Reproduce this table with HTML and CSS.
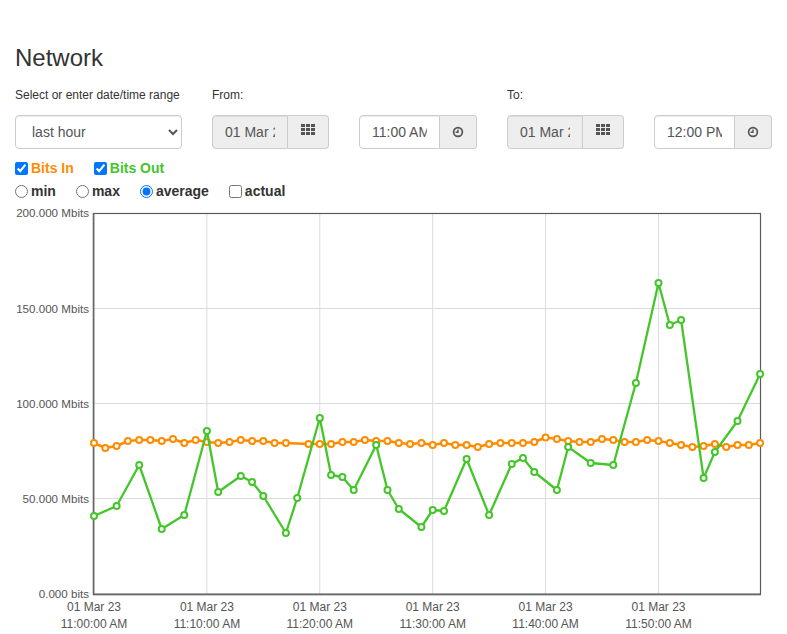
FILE: index.html
```html
<!DOCTYPE html>
<html lang="en">
<head>
<meta charset="utf-8">
<title>Network</title>
<link rel="stylesheet" href="styles.css">
</head>
<body>
<div class="page">
  <h3 class="title">Network</h3>
  <div class="controls">
    <div class="field range">
      <label class="field-label">Select or enter date/time range</label>
      <select class="select">
        <option>last hour</option>
      </select>
    </div>
    <div class="field">
      <label class="field-label">From:</label>
      <div class="groups">
        <div class="group date">
          <input class="control" type="text" value="01 Mar 2023" readonly>
          <span class="addon"><svg class="icon-grid" width="14" height="11" viewBox="0 0 14 11"><g fill="#555"><rect x="0" y="0" width="4" height="3"/><rect x="5" y="0" width="4" height="3"/><rect x="10" y="0" width="4" height="3"/><rect x="0" y="4" width="4" height="3"/><rect x="5" y="4" width="4" height="3"/><rect x="10" y="4" width="4" height="3"/><rect x="0" y="8" width="4" height="3"/><rect x="5" y="8" width="4" height="3"/><rect x="10" y="8" width="4" height="3"/></g></svg></span>
        </div>
        <div class="group time">
          <input class="control" type="text" value="11:00 AM">
          <span class="addon"><svg width="12" height="12" viewBox="-6 -6 12 12"><circle r="4.4" fill="none" stroke="#555" stroke-width="1.7"/><path d="M0 -2.6 V0.3 H-2.4" fill="none" stroke="#555" stroke-width="1.4"/></svg></span>
        </div>
      </div>
    </div>
    <div class="field">
      <label class="field-label">To:</label>
      <div class="groups">
        <div class="group date">
          <input class="control" type="text" value="01 Mar 2023" readonly>
          <span class="addon"><svg class="icon-grid" width="14" height="11" viewBox="0 0 14 11"><g fill="#555"><rect x="0" y="0" width="4" height="3"/><rect x="5" y="0" width="4" height="3"/><rect x="10" y="0" width="4" height="3"/><rect x="0" y="4" width="4" height="3"/><rect x="5" y="4" width="4" height="3"/><rect x="10" y="4" width="4" height="3"/><rect x="0" y="8" width="4" height="3"/><rect x="5" y="8" width="4" height="3"/><rect x="10" y="8" width="4" height="3"/></g></svg></span>
        </div>
        <div class="group time">
          <input class="control" type="text" value="12:00 PM">
          <span class="addon"><svg width="12" height="12" viewBox="-6 -6 12 12"><circle r="4.4" fill="none" stroke="#555" stroke-width="1.7"/><path d="M0 -2.6 V0.3 H-2.4" fill="none" stroke="#555" stroke-width="1.4"/></svg></span>
        </div>
      </div>
    </div>
  </div>
  <div class="opts first">
    <label class="opt in"><input type="checkbox" checked>Bits In</label>
    <label class="opt out"><input type="checkbox" checked>Bits Out</label>
  </div>
  <div class="opts">
    <label class="opt"><input type="radio" name="agg">min</label>
    <label class="opt"><input type="radio" name="agg">max</label>
    <label class="opt"><input type="radio" name="agg" checked>average</label>
    <label class="opt"><input type="checkbox">actual</label>
  </div>
</div>
<div class="chart">
  <svg width="787" height="431" viewBox="0 203 787 431">
    <defs>
      <marker id="mo" markerUnits="userSpaceOnUse" markerWidth="10" markerHeight="10" refX="5" refY="5" viewBox="0 0 10 10">
        <circle cx="5" cy="5" r="3" fill="#fff" stroke="#ff8c00" stroke-width="2"/>
      </marker>
      <marker id="mg" markerUnits="userSpaceOnUse" markerWidth="10" markerHeight="10" refX="5" refY="5" viewBox="0 0 10 10">
        <circle cx="5" cy="5" r="3" fill="#fff" stroke="#44c62a" stroke-width="2"/>
      </marker>
    </defs>
    <g stroke="#dcdcdc" stroke-width="1">
      <line x1="206.9" y1="213" x2="206.9" y2="594"/>
      <line x1="319.8" y1="213" x2="319.8" y2="594"/>
      <line x1="432.7" y1="213" x2="432.7" y2="594"/>
      <line x1="545.6" y1="213" x2="545.6" y2="594"/>
      <line x1="658.5" y1="213" x2="658.5" y2="594"/>
      <line x1="94" y1="308.5" x2="760" y2="308.5"/>
      <line x1="94" y1="403.5" x2="760" y2="403.5"/>
      <line x1="94" y1="498.5" x2="760" y2="498.5"/>
    </g>
    <rect x="93.5" y="213.5" width="667" height="381" fill="none" stroke="#5a5a5a" stroke-width="1.2"/>
    <line x1="93.6" y1="213" x2="93.6" y2="595" stroke="#666" stroke-width="1.6"/>
    <line x1="93" y1="594.4" x2="761" y2="594.4" stroke="#666" stroke-width="1.6"/>
    <g class="axis-y" text-anchor="end">
      <text x="89" y="217.3">200.000 Mbits</text>
      <text x="89" y="312.6">150.000 Mbits</text>
      <text x="89" y="407.8">100.000 Mbits</text>
      <text x="89" y="503">50.000 Mbits</text>
      <text x="89" y="598.3">0.000 bits</text>
    </g>
    <g class="axis-x" text-anchor="middle">
      <text x="94" y="611">01 Mar 23</text><text x="94" y="628.3">11:00:00 AM</text>
      <text x="206.9" y="611">01 Mar 23</text><text x="206.9" y="628.3">11:10:00 AM</text>
      <text x="319.8" y="611">01 Mar 23</text><text x="319.8" y="628.3">11:20:00 AM</text>
      <text x="432.7" y="611">01 Mar 23</text><text x="432.7" y="628.3">11:30:00 AM</text>
      <text x="545.6" y="611">01 Mar 23</text><text x="545.6" y="628.3">11:40:00 AM</text>
      <text x="658.5" y="611">01 Mar 23</text><text x="658.5" y="628.3">11:50:00 AM</text>
    </g>
    <polyline class="series-in" marker-start="url(#mo)" marker-mid="url(#mo)" marker-end="url(#mo)" points="94,443 105.3,448 116.6,446 127.9,441 139.2,440 150.4,440 161.7,441 173,439 184.3,443 195.6,440 206.9,442 218.2,443 229.5,442 240.8,440 252.1,441 263.3,441 274.6,443 285.9,443 308.5,444 319.8,444 331.1,444 342.4,442 353.7,442 364.9,440 376.2,441 387.5,441 398.8,443 410.1,444 421.4,443 432.7,445 444,443 455.3,445 466.6,445 477.8,447 489.1,444 500.4,443 511.7,443 523,443 534.3,442 545.6,437.5 556.9,439 568.2,441 579.5,442 590.7,442 602,439 613.3,440 624.6,442 635.9,442 647.2,440 658.5,441 669.8,443 681.1,445 692.4,447 703.6,446 714.9,444 726.2,447 737.5,445 748.8,445 760.1,443"/>
    <polyline class="series-out" marker-start="url(#mg)" marker-mid="url(#mg)" marker-end="url(#mg)" points="94,516 116.6,506 139.2,465 161.7,529 184.3,515 206.9,431 218.2,492 240.8,476 252.1,482 263.3,496 285.9,533 297.2,498 319.8,418 331.1,475 342.4,477 353.7,490 376.2,445 387.5,490 398.8,509 421.4,527 432.7,510 444,511 466.6,459 489.1,515 511.7,464 523,458 534.3,472 556.9,490 568.2,447 590.7,463 613.3,465 635.9,383 658.5,283 669.8,325 681.1,320 703.6,478 714.9,452 737.5,421 760.1,374"/>
  </svg>
</div>
</body>
</html>
```

FILE: styles.css
```css
html, body {
  margin: 0;
  padding: 0;
  background: #fff;
}

body {
  font-family: "Liberation Sans", Arial, sans-serif;
  font-size: 14px;
  line-height: 1.42857;
  color: #333;
  overflow: hidden;
}

.page {
  padding: 0 15px;
}

.title {
  font-size: 24px;
  font-weight: normal;
  line-height: 1.1;
  margin: 45px 0 0;
  color: #333;
}

.controls {
  display: flex;
  gap: 30px;
  margin-top: 15.6px;
}

.field-label {
  display: block;
  font-size: 12px;
  line-height: 17px;
  margin-bottom: 11px;
  font-weight: normal;
}

.select {
  width: 167px;
  height: 34px;
  box-sizing: border-box;
  padding: 6px 12px;
  font-family: inherit;
  font-size: 14px;
  color: #555;
  background-color: #fff;
  border: 1px solid #ccc;
  border-radius: 4px;
  box-shadow: inset 0 1px 1px rgba(0, 0, 0, .075);
  margin: 0;
}

.groups {
  display: flex;
  gap: 30px;
}

.group {
  display: flex;
  height: 34px;
}

.control {
  box-sizing: border-box;
  height: 34px;
  margin: 0;
  padding: 6px 12px;
  font-family: inherit;
  font-size: 14px;
  color: #555;
  border: 1px solid #ccc;
  border-radius: 4px 0 0 4px;
  box-shadow: inset 0 1px 1px rgba(0, 0, 0, .075);
  outline: none;
}

.date .control {
  width: 76px;
  background: #eee;
}

.time .control {
  width: 81px;
  background: #fff;
}

.addon {
  box-sizing: border-box;
  height: 34px;
  display: flex;
  align-items: center;
  justify-content: center;
  background: #eee;
  border: 1px solid #ccc;
  border-left: 0;
  border-radius: 0 4px 4px 0;
}

.date .addon {
  width: 41px;
}

.time .addon {
  width: 37px;
}

.icon-grid {
  margin-bottom: 5px;
}

.opts {
  display: flex;
  gap: 20px;
  height: 23px;
  align-items: center;
}

.opts.first {
  margin-top: 8px;
}

.opt {
  display: flex;
  align-items: center;
  font-weight: bold;
  font-size: 14px;
  line-height: 23px;
}

.opt input {
  margin: 0 3px 0 0;
  width: 13px;
  height: 13px;
}

.opt.in {
  color: #ff8c00;
}

.opt.out {
  color: #44c62a;
}

.chart svg {
  display: block;
}

.axis-y text,
.axis-x text {
  font-family: "Liberation Sans", Arial, sans-serif;
  font-size: 12px;
  fill: #555;
}

.axis-y text {
  font-size: 11.6px;
}

.series-in {
  fill: none;
  stroke: #ff8c00;
  stroke-width: 2.5;
  stroke-linejoin: round;
}

.series-out {
  fill: none;
  stroke: #44c62a;
  stroke-width: 2.3;
  stroke-linejoin: round;
}
```
